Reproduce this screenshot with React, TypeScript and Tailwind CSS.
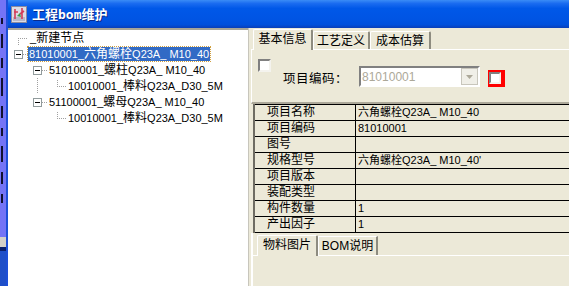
import React from 'react';

const cjk = "font-['Liberation_Sans','Noto_Sans_CJK_SC',sans-serif]";

type Row = { label: string; value: string };

const rows: Row[] = [
  { label: '项目名称', value: '六角螺栓Q23A_ M10_40' },
  { label: '项目编码', value: '81010001' },
  { label: '图号', value: '' },
  { label: '规格型号', value: "六角螺栓Q23A_ M10_40'" },
  { label: '项目版本', value: '' },
  { label: '装配类型', value: '' },
  { label: '构件数量', value: '1' },
  { label: '产出因子', value: '1' },
];

// latin runs are set a bit smaller than the CJK runs, like the old Tahoma + SimSun mix
function Mixed({ text }: { text: string }) {
  const parts = text.split(/([\u4e00-\u9fff]+)/).filter(Boolean);
  return (
    <>
      {parts.map((p, i) =>
        /[\u4e00-\u9fff]/.test(p) ? (
          <span key={i} className="text-[12px]">{p}</span>
        ) : (
          <span key={i} className="text-[11px]">{p}</span>
        )
      )}
    </>
  );
}

function AppIcon() {
  return (
    <svg width="16" height="17" viewBox="0 0 16 17">
      <rect x="0.5" y="0.5" width="15" height="16" fill="#dcdce4" stroke="#8a8aa0" />
      <rect x="2" y="11" width="12" height="4" fill="#b8b8c8" />
      <path d="M4 3 L4 13 M3 6 L7 6 M11 2 L11 13 M9 8 L13 5" stroke="#d23c5a" strokeWidth="1.6" fill="none" />
      <path d="M6 10 L9 7 L10 11 Z" fill="#3c9a4a" />
    </svg>
  );
}

function TitleBar() {
  return (
    <div className="h-[28px] flex items-center gap-[5px] pl-[3px] bg-[linear-gradient(to_bottom,#3a8cf6_0%,#1b6cf0_12%,#0058e8_30%,#0054e3_70%,#0050dc_88%,#0a3fb8_100%)]">
      <AppIcon />
      <span className={`${cjk} text-[13px] font-bold text-white leading-none [text-shadow:1px_1px_#0a2a8a]`}>
        工程<span className="font-['DejaVu_Sans_Mono',monospace] text-[13px]">bom</span>维护
      </span>
    </div>
  );
}

function LeftStrip() {
  const marks = [6, 14, 10, 18, 12, 8, 16, 12, 9];
  return (
    <div className="w-[6px] flex flex-col h-full">
      <div className="flex-1 bg-[#7474f6] flex flex-col gap-[10px] pt-[18px] pl-[1px]">
        {marks.map((h, i) => (
          <div key={i} className="w-[2px] bg-[#101030]" style={{ height: h }} />
        ))}
      </div>
      <div className="h-[10px] bg-[#d4d0c8]" />
      <div className="h-[4px] bg-[#0a1f6a]" />
      <div className="h-[35px] bg-[#1f4fc8]" />
    </div>
  );
}

function Box() {
  return (
    <div className="w-[9px] h-[9px] border border-[#919b9c] bg-white flex items-center justify-center">
      <div className="w-[5px] h-[1px] bg-black" />
    </div>
  );
}

function Tree() {
  const dot = '#a0a0a0';
  return (
    <div className={`w-[240px] bg-white border-t-2 border-[#a8a698] ${cjk} text-[12px] text-black`}>
      {/* _新建节点 */}
      <div className="h-[16px] flex items-center">
        <svg width="22" height="16" className="shrink-0">
          <path d="M10 8.5 H20 M10.5 8 V16" stroke={dot} strokeDasharray="1 1" />
        </svg>
        <span className="leading-[16px]"><Mixed text="_新建节点" /></span>
      </div>
      {/* root */}
      <div className="h-[16px] flex items-center">
        <div className="w-[20px] h-[16px] flex items-center pl-[6px] shrink-0">
          <Box />
          <svg width="5" height="16"><path d="M0 8.5 H5" stroke={dot} strokeDasharray="1 1" /></svg>
        </div>
        <span className="leading-[14px] px-[1px] bg-[#316ac5] text-white outline-1 outline-dotted outline-[#d0a040]">
          <Mixed text="81010001_六角螺栓Q23A_ M10_40" />
        </span>
      </div>
      {/* child 1 */}
      <div className="h-[16px] flex items-center">
        <div className="w-[41px] h-[16px] flex items-center pl-[25px] shrink-0">
          <Box />
          <svg width="7" height="16"><path d="M0 8.5 H6" stroke={dot} strokeDasharray="1 1" /></svg>
        </div>
        <span className="leading-[16px]"><Mixed text="51010001_螺柱Q23A_ M10_40" /></span>
      </div>
      {/* grandchild 1 */}
      <div className="h-[16px] flex items-center">
        <svg width="60" height="16" className="shrink-0">
          <path d="M29.5 0 V16" stroke={dot} strokeDasharray="1 1" />
          <path d="M49.5 2 V8 M49 8.5 H58" stroke={dot} strokeDasharray="1 1" />
        </svg>
        <span className="leading-[16px]"><Mixed text="10010001_棒料Q23A_D30_5M" /></span>
      </div>
      {/* child 2 */}
      <div className="h-[16px] flex items-center">
        <div className="w-[41px] h-[16px] flex items-center pl-[25px] shrink-0">
          <Box />
          <svg width="7" height="16"><path d="M0 8.5 H6" stroke={dot} strokeDasharray="1 1" /></svg>
        </div>
        <span className="leading-[16px]"><Mixed text="51100001_螺母Q23A_ M10_40" /></span>
      </div>
      {/* grandchild 2 */}
      <div className="h-[16px] flex items-center">
        <svg width="60" height="16" className="shrink-0">
          <path d="M49.5 2 V8 M49 8.5 H58" stroke={dot} strokeDasharray="1 1" />
        </svg>
        <span className="leading-[16px]"><Mixed text="10010001_棒料Q23A_D30_5M" /></span>
      </div>
    </div>
  );
}

function Tab({ label, active, w }: { label: string; active?: boolean; w: string }) {
  return (
    <div
      className={`${w} ${active ? 'h-[21px] -mb-[1px] bg-[#ece9d8] z-10' : 'h-[18px]'} flex items-center justify-center border-t border-l border-white border-r-2 border-r-[#8e8c80] rounded-t-[2px] shrink-0`}
    >
      <span className={`${active ? 'pb-[2px]' : ''} leading-none`}>{label}</span>
    </div>
  );
}

function Checkbox() {
  return (
    <div className="w-[13px] h-[13px] border-2 border-t-[#808080] border-l-[#808080] border-b-[#f4f3ee] border-r-[#f4f3ee] bg-white shrink-0" />
  );
}

function RightPanel() {
  return (
    <div className={`flex-1 min-w-0 flex flex-col ${cjk} text-[12px] text-black`}>
      {/* top tabs */}
      <div className="h-[21px] flex items-end pl-[2px]">
        <Tab label="基本信息" active w="w-[60px]" />
        <Tab label="工艺定义" w="w-[57px]" />
        <Tab label="成本估算" w="w-[61px]" />
      </div>
      <div className="h-[55px] border-t border-l border-white border-b-2 border-b-[#aca899] flex items-start pl-[6px]">
        <div className="mt-[9px]">
          <Checkbox />
        </div>
        <span className="ml-[12px] mt-[21px] leading-[16px] text-[12.5px] tracking-[0.5px]">项目编码：</span>
        <div className="ml-[11px] mt-[16px] w-[121px] h-[21px] border-2 border-t-[#808080] border-l-[#808080] border-b-white border-r-white bg-white flex items-center">
          <span className="flex-1 pl-[1px] text-[#aca899] text-[12px] leading-none">81010001</span>
          <div className="w-[17px] h-[17px] bg-[#f0efe8] border border-[#c8c6bc] flex items-center justify-center">
            <svg width="7" height="4"><path d="M0 0 H7 L3.5 4 Z" fill="#aca899" /></svg>
          </div>
        </div>
        <div className="ml-[8px] mt-[20px] w-[17px] h-[17px] bg-[#ff0000] pl-[1px] pt-[2px]">
          <div className="w-[12px] h-[12px] border-2 border-t-[#808080] border-l-[#808080] border-b-[#f4f3ee] border-r-[#f4f3ee] bg-white" />
        </div>
      </div>
      {/* grid */}
      <div className="h-[129px] overflow-hidden ml-[2px] border-l-2 border-[#6e6c62]">
        <div className="border-t border-black">
          {rows.map((r) => (
            <div key={r.label} className="h-[16px] flex border-b border-black">
              <div className="w-[101px] shrink-0 border-r border-black pl-[12px] leading-[15px] text-[12px]">{r.label}</div>
              <div className="flex-1 pl-[2px] leading-[15px] text-[11px]">{r.value}</div>
            </div>
          ))}
        </div>
      </div>
      {/* bottom tabs */}
      <div className="h-[22px] flex items-end pl-[4px] border-l-2 border-white">
        <Tab label="物料图片" active w="w-[61px]" />
        <div className="w-[60px] h-[19px] flex items-center justify-center border-t border-l border-white border-r-2 border-r-[#8e8c80] shrink-0">
          <span className="leading-none font-['Liberation_Sans',sans-serif] text-[12px]">BOM</span>
          <span className="leading-none">说明</span>
        </div>
      </div>
      <div className="flex-1 border-t border-l-2 border-white" />
    </div>
  );
}

export default function App() {
  return (
    <div className="w-[569px] h-[286px] overflow-hidden flex bg-[#ece9d8]">
      <LeftStrip />
      <div className="w-[2px] bg-[#1d4fd8]" />
      <div className="flex-1 min-w-0 flex flex-col">
        <TitleBar />
        <div className="flex-1 min-h-0 flex">
          <Tree />
          <div className="w-[3px] border-l border-[#c8c6bc]" />
          <RightPanel />
        </div>
      </div>
    </div>
  );
}
